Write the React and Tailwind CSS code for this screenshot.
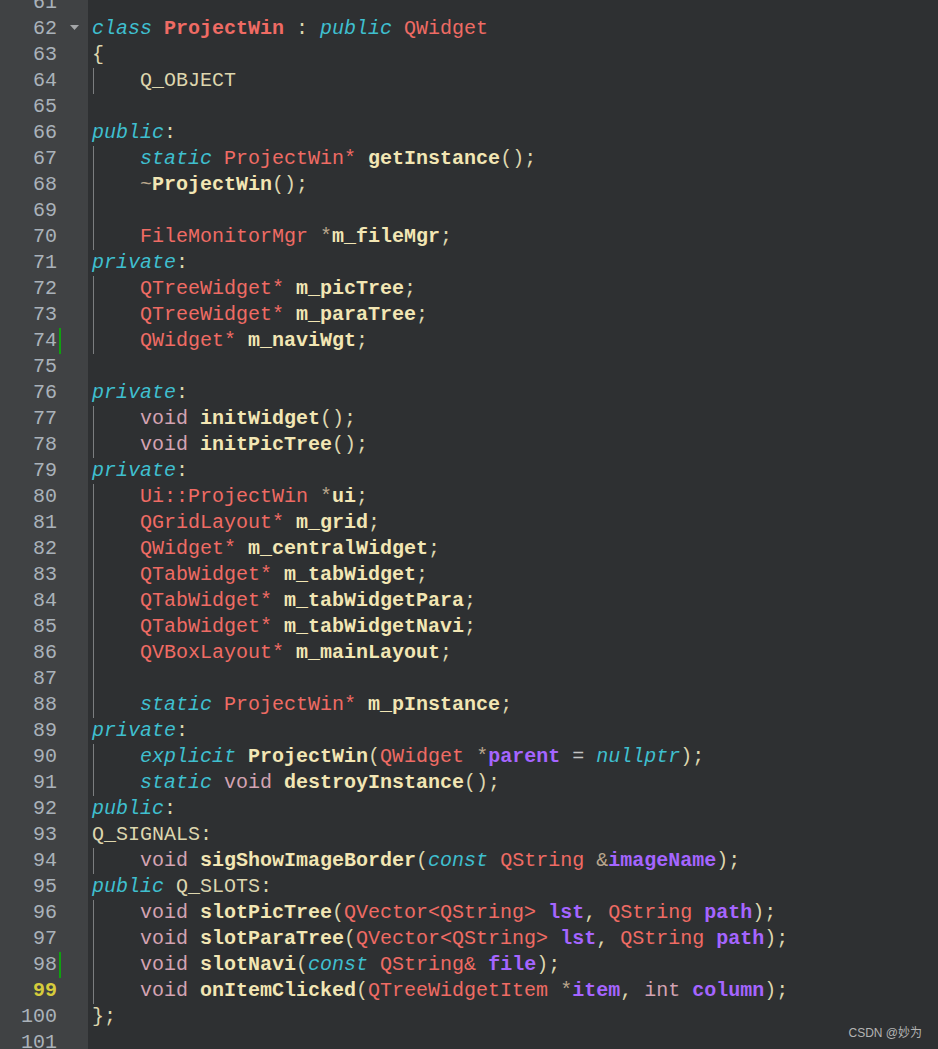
import React from "react";

const C = {
  k: "italic text-[#3fbfcf]",
  t: "text-[#ef6b64]",
  tb: "font-bold text-[#ef6b64]",
  f: "font-bold text-[#f2e6b4]",
  p: "font-bold text-[#a565ff]",
  v: "text-[#d3a3b3]",
  s: "text-[#b9a68c]",
  o: "text-[#ddd6ae]",
  g: "text-[#c4c4c4]",
};

const L = (...parts) => parts.map((p) => (typeof p === "string" ? ["o", p] : p));

const lines = [
  { n: 61, c: L() },
  { n: 62, fold: true, c: L(["k", "class"], " ", ["tb", "ProjectWin"], " : ", ["k", "public"], " ", ["t", "QWidget"]) },
  { n: 63, c: L("{") },
  { n: 64, g: true, c: L("    Q_OBJECT") },
  { n: 65, c: L() },
  { n: 66, c: L(["k", "public"], ":") },
  { n: 67, g: true, c: L("    ", ["k", "static"], " ", ["t", "ProjectWin*"], " ", ["f", "getInstance"], "();") },
  { n: 68, g: true, c: L("    ", ["s", "~"], ["f", "ProjectWin"], "();") },
  { n: 69, g: true, c: L() },
  { n: 70, g: true, c: L("    ", ["t", "FileMonitorMgr"], " ", ["s", "*"], ["f", "m_fileMgr"], ";") },
  { n: 71, c: L(["k", "private"], ":") },
  { n: 72, g: true, c: L("    ", ["t", "QTreeWidget*"], " ", ["f", "m_picTree"], ";") },
  { n: 73, g: true, c: L("    ", ["t", "QTreeWidget*"], " ", ["f", "m_paraTree"], ";") },
  { n: 74, g: true, mark: true, c: L("    ", ["t", "QWidget*"], " ", ["f", "m_naviWgt"], ";") },
  { n: 75, c: L() },
  { n: 76, c: L(["k", "private"], ":") },
  { n: 77, g: true, c: L("    ", ["v", "void"], " ", ["f", "initWidget"], "();") },
  { n: 78, g: true, c: L("    ", ["v", "void"], " ", ["f", "initPicTree"], "();") },
  { n: 79, c: L(["k", "private"], ":") },
  { n: 80, g: true, c: L("    ", ["t", "Ui::ProjectWin"], " ", ["s", "*"], ["f", "ui"], ";") },
  { n: 81, g: true, c: L("    ", ["t", "QGridLayout*"], " ", ["f", "m_grid"], ";") },
  { n: 82, g: true, c: L("    ", ["t", "QWidget*"], " ", ["f", "m_centralWidget"], ";") },
  { n: 83, g: true, c: L("    ", ["t", "QTabWidget*"], " ", ["f", "m_tabWidget"], ";") },
  { n: 84, g: true, c: L("    ", ["t", "QTabWidget*"], " ", ["f", "m_tabWidgetPara"], ";") },
  { n: 85, g: true, c: L("    ", ["t", "QTabWidget*"], " ", ["f", "m_tabWidgetNavi"], ";") },
  { n: 86, g: true, c: L("    ", ["t", "QVBoxLayout*"], " ", ["f", "m_mainLayout"], ";") },
  { n: 87, g: true, c: L() },
  { n: 88, g: true, c: L("    ", ["k", "static"], " ", ["t", "ProjectWin*"], " ", ["f", "m_pInstance"], ";") },
  { n: 89, c: L(["k", "private"], ":") },
  { n: 90, g: true, c: L("    ", ["k", "explicit"], " ", ["f", "ProjectWin"], "(", ["t", "QWidget"], " ", ["s", "*"], ["p", "parent"], ["g", " = "], ["k", "nullptr"], ");") },
  { n: 91, g: true, c: L("    ", ["k", "static"], " ", ["v", "void"], " ", ["f", "destroyInstance"], "();") },
  { n: 92, c: L(["k", "public"], ":") },
  { n: 93, c: L("Q_SIGNALS:") },
  { n: 94, g: true, c: L("    ", ["v", "void"], " ", ["f", "sigShowImageBorder"], "(", ["k", "const"], " ", ["t", "QString"], " ", ["s", "&"], ["p", "imageName"], ");") },
  { n: 95, c: L(["k", "public"], " Q_SLOTS:") },
  { n: 96, g: true, c: L("    ", ["v", "void"], " ", ["f", "slotPicTree"], "(", ["t", "QVector<QString>"], " ", ["p", "lst"], ", ", ["t", "QString"], " ", ["p", "path"], ");") },
  { n: 97, g: true, c: L("    ", ["v", "void"], " ", ["f", "slotParaTree"], "(", ["t", "QVector<QString>"], " ", ["p", "lst"], ", ", ["t", "QString"], " ", ["p", "path"], ");") },
  { n: 98, g: true, mark: true, c: L("    ", ["v", "void"], " ", ["f", "slotNavi"], "(", ["k", "const"], " ", ["t", "QString&"], " ", ["p", "file"], ");") },
  { n: 99, g: true, cur: true, c: L("    ", ["v", "void"], " ", ["f", "onItemClicked"], "(", ["t", "QTreeWidgetItem"], " ", ["s", "*"], ["p", "item"], ", ", ["v", "int"], " ", ["p", "column"], ");") },
  { n: 100, c: L("};") },
  { n: 101, c: L() },
];

export default function App() {
  return (
    <div
      className="relative w-[938px] h-[1049px] overflow-hidden bg-[#2e3032] text-[20px] leading-[26px]"
      style={{ fontFamily: '"Liberation Mono", "DejaVu Sans Mono", monospace' }}
    >
      <div className="flex flex-col mt-[-10px]">
        {lines.map((ln) => (
          <div key={ln.n} className="flex h-[26px]">
            <div className="flex w-[88px] shrink-0 bg-[#404244]">
              <div
                className={
                  "w-[57px] text-right " +
                  (ln.cur ? "font-bold text-[#d6cc3c]" : "text-[#aab2ba]")
                }
              >
                {ln.n}
              </div>
              <div className="w-[2px] ml-[2px]">
                {ln.mark && <div className="w-[2px] h-[26px] bg-[#10a010]" />}
              </div>
              <div className="flex-1 flex items-center justify-center pb-[2px]">
                {ln.fold && (
                  <svg width="9" height="6" viewBox="0 0 9 6">
                    <path d="M0 0 L9 0 L4.5 5 Z" fill="#a4a6a8" />
                  </svg>
                )}
              </div>
            </div>
            <div className="relative flex-1 pl-[4px] whitespace-pre">
              {ln.g && <span className="absolute left-[5px] top-0 bottom-0 w-px bg-[#7b7d7f]" />}
              {ln.c.map(([cls, txt], i) => (
                <span key={i} className={C[cls]}>
                  {txt}
                </span>
              ))}
            </div>
          </div>
        ))}
      </div>
      <div
        className="absolute right-[16px] bottom-[9px] text-[12px] leading-[14px] text-[#b4b4b4]"
        style={{ fontFamily: '"Liberation Sans", "Noto Sans CJK SC", sans-serif' }}
      >
        CSDN @妙为
      </div>
    </div>
  );
}
